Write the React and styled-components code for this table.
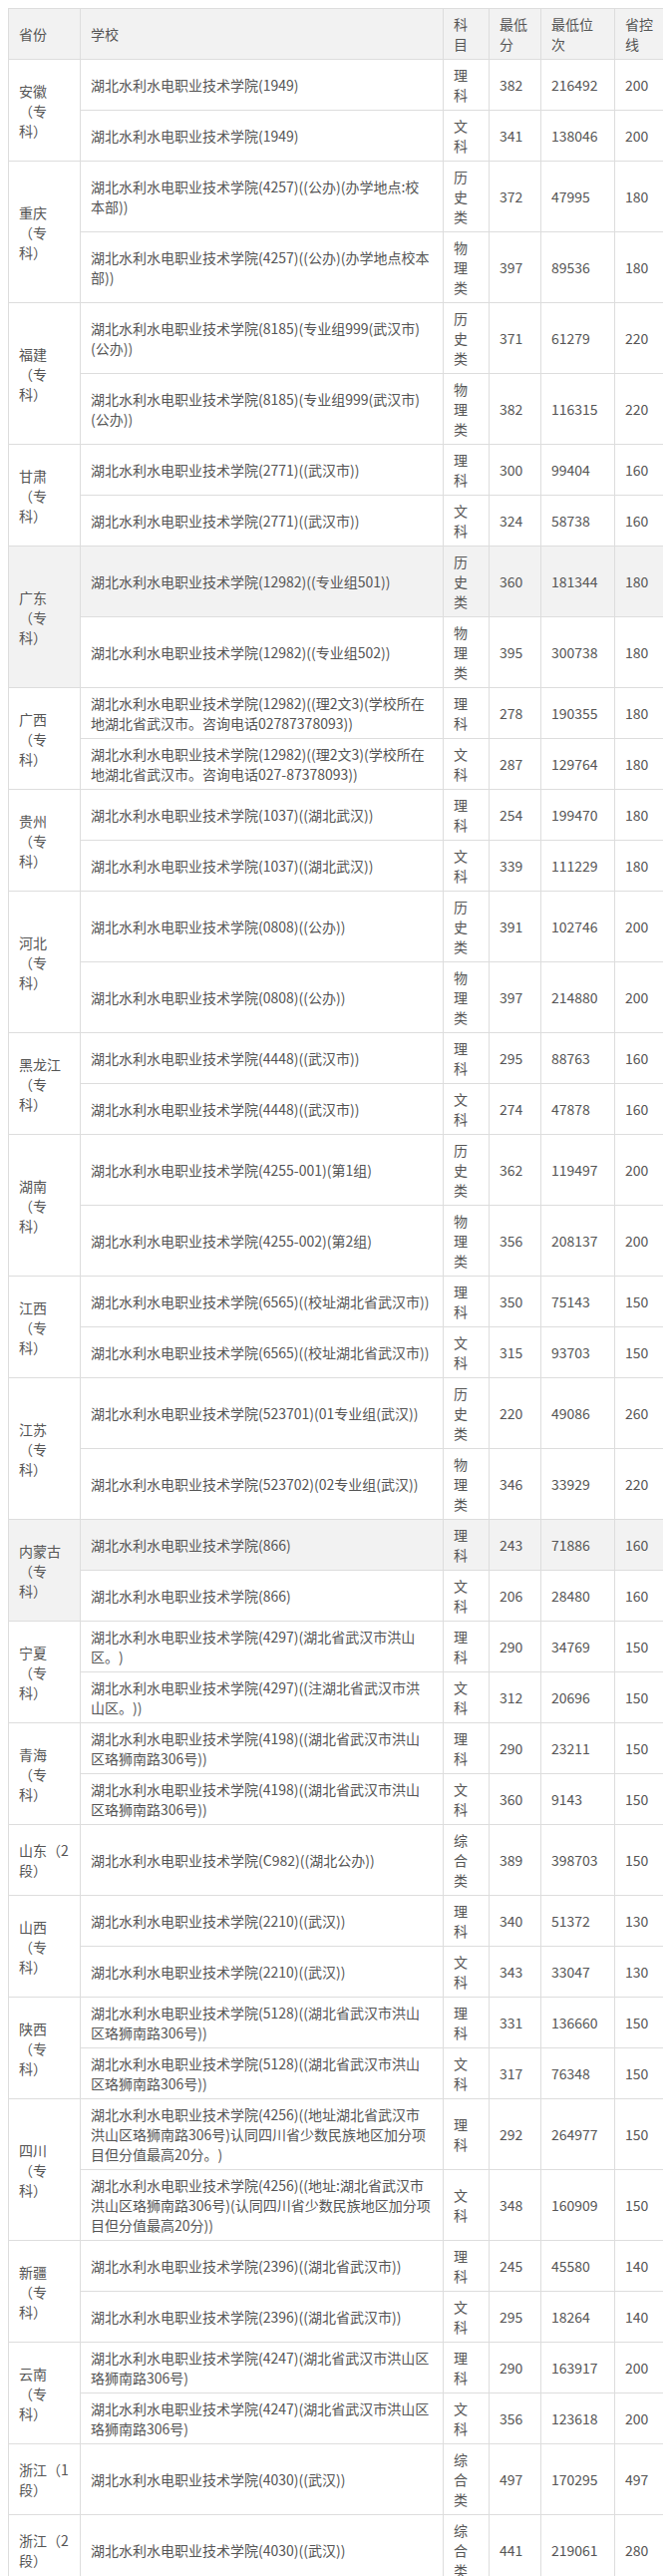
import React from "react";
import styled, { createGlobalStyle } from "styled-components";

const GlobalStyle = createGlobalStyle`
  html, body { background: #fff; }
  body {
    margin: 8px;
    font-family: "Microsoft YaHei", "Noto Sans CJK SC", "Noto Sans", sans-serif;
  }
`;

const Table = styled.table`
  width: 100%;
  border-collapse: collapse;
  table-layout: fixed;
  font-size: 14px;
  line-height: 20px;
  color: #555;
  text-spacing-trim: space-all;
`;

const Col = styled.col`
  width: ${(p) => p.$w}px;
`;

const HeadRow = styled.tr`
  background: #f2f2f2;
`;

const Th = styled.th`
  border: 1px solid #ddd;
  padding: 5px 10px;
  text-align: left;
  font-weight: normal;
  vertical-align: middle;
`;

const Row = styled.tr`
  background: ${(p) => (p.$hl ? "#f2f2f2" : "#fff")};
`;

const Td = styled.td`
  border: 1px solid #ddd;
  padding: 5px 10px;
  text-align: left;
  vertical-align: middle;
  word-break: normal;
  overflow-wrap: break-word;
  text-spacing-trim: space-all;
`;

const S = "湖北水利水电职业技术学院";

const groups = [
  { p: "安徽（专科）", rows: [
    [S + "(1949)", "理科", "382", "216492", "200"],
    [S + "(1949)", "文科", "341", "138046", "200"],
  ]},
  { p: "重庆（专科）", rows: [
    [S + "(4257)((公办)(办学地点:校本部))", "历史类", "372", "47995", "180"],
    [S + "(4257)((公办)(办学地点校本部))", "物理类", "397", "89536", "180"],
  ]},
  { p: "福建（专科）", rows: [
    [S + "(8185)(专业组999(武汉市)(公办))", "历史类", "371", "61279", "220"],
    [S + "(8185)(专业组999(武汉市)(公办))", "物理类", "382", "116315", "220"],
  ]},
  { p: "甘肃（专科）", rows: [
    [S + "(2771)((武汉市))", "理科", "300", "99404", "160"],
    [S + "(2771)((武汉市))", "文科", "324", "58738", "160"],
  ]},
  { p: "广东（专科）", hl: true, rows: [
    [S + "(12982)((专业组501))", "历史类", "360", "181344", "180"],
    [S + "(12982)((专业组502))", "物理类", "395", "300738", "180"],
  ]},
  { p: "广西（专科）", rows: [
    [S + "(12982)((理2文3)(学校所在地湖北省武汉市。咨询电话02787378093))", "理科", "278", "190355", "180"],
    [S + "(12982)((理2文3)(学校所在地湖北省武汉市。咨询电话027-87378093))", "文科", "287", "129764", "180"],
  ]},
  { p: "贵州（专科）", rows: [
    [S + "(1037)((湖北武汉))", "理科", "254", "199470", "180"],
    [S + "(1037)((湖北武汉))", "文科", "339", "111229", "180"],
  ]},
  { p: "河北（专科）", rows: [
    [S + "(0808)((公办))", "历史类", "391", "102746", "200"],
    [S + "(0808)((公办))", "物理类", "397", "214880", "200"],
  ]},
  { p: "黑龙江（专科）", rows: [
    [S + "(4448)((武汉市))", "理科", "295", "88763", "160"],
    [S + "(4448)((武汉市))", "文科", "274", "47878", "160"],
  ]},
  { p: "湖南（专科）", rows: [
    [S + "(4255-001)(第1组)", "历史类", "362", "119497", "200"],
    [S + "(4255-002)(第2组)", "物理类", "356", "208137", "200"],
  ]},
  { p: "江西（专科）", rows: [
    [S + "(6565)((校址湖北省武汉市))", "理科", "350", "75143", "150"],
    [S + "(6565)((校址湖北省武汉市))", "文科", "315", "93703", "150"],
  ]},
  { p: "江苏（专科）", rows: [
    [S + "(523701)(01专业组(武汉))", "历史类", "220", "49086", "260"],
    [S + "(523702)(02专业组(武汉))", "物理类", "346", "33929", "220"],
  ]},
  { p: "内蒙古（专科）", hl: true, rows: [
    [S + "(866)", "理科", "243", "71886", "160"],
    [S + "(866)", "文科", "206", "28480", "160"],
  ]},
  { p: "宁夏（专科）", rows: [
    [S + "(4297)(湖北省武汉市洪山区。)", "理科", "290", "34769", "150"],
    [S + "(4297)((注湖北省武汉市洪山区。))", "文科", "312", "20696", "150"],
  ]},
  { p: "青海（专科）", rows: [
    [S + "(4198)((湖北省武汉市洪山区珞狮南路306号))", "理科", "290", "23211", "150"],
    [S + "(4198)((湖北省武汉市洪山区珞狮南路306号))", "文科", "360", "9143", "150"],
  ]},
  { p: "山东（2段）", rows: [
    [S + "(C982)((湖北公办))", "综合类", "389", "398703", "150"],
  ]},
  { p: "山西（专科）", rows: [
    [S + "(2210)((武汉))", "理科", "340", "51372", "130"],
    [S + "(2210)((武汉))", "文科", "343", "33047", "130"],
  ]},
  { p: "陕西（专科）", rows: [
    [S + "(5128)((湖北省武汉市洪山区珞狮南路306号))", "理科", "331", "136660", "150"],
    [S + "(5128)((湖北省武汉市洪山区珞狮南路306号))", "文科", "317", "76348", "150"],
  ]},
  { p: "四川（专科）", rows: [
    [S + "(4256)((地址湖北省武汉市洪山区珞狮南路306号)认同四川省少数民族地区加分项目但分值最高20分。)", "理科", "292", "264977", "150"],
    [S + "(4256)((地址:湖北省武汉市洪山区珞狮南路306号)(认同四川省少数民族地区加分项目但分值最高20分))", "文科", "348", "160909", "150"],
  ]},
  { p: "新疆（专科）", rows: [
    [S + "(2396)((湖北省武汉市))", "理科", "245", "45580", "140"],
    [S + "(2396)((湖北省武汉市))", "文科", "295", "18264", "140"],
  ]},
  { p: "云南（专科）", rows: [
    [S + "(4247)(湖北省武汉市洪山区珞狮南路306号)", "理科", "290", "163917", "200"],
    [S + "(4247)(湖北省武汉市洪山区珞狮南路306号)", "文科", "356", "123618", "200"],
  ]},
  { p: "浙江（1段）", rows: [
    [S + "(4030)((武汉))", "综合类", "497", "170295", "497"],
  ]},
  { p: "浙江（2段）", rows: [
    [S + "(4030)((武汉))", "综合类", "441", "219061", "280"],
  ]},
];

const widths = [72, 364, 46, 52, 74, 49];
const heads = ["省份", "学校", "科目", "最低分", "最低位次", "省控线"];

export default function App() {
  return (
    <>
      <GlobalStyle />
      <Table>
        <colgroup>
          {widths.map((w, i) => (
            <Col key={i} $w={w} />
          ))}
        </colgroup>
        <thead>
          <HeadRow>
            {heads.map((h) => (
              <Th key={h}>{h}</Th>
            ))}
          </HeadRow>
        </thead>
        <tbody>
          {groups.map((g) =>
            g.rows.map((r, i) => (
              <Row key={g.p + i} $hl={g.hl && i === 0}>
                {i === 0 && <Td rowSpan={g.rows.length}>{g.p}</Td>}
                {r.map((c, j) => (
                  <Td key={j}>{c}</Td>
                ))}
              </Row>
            ))
          )}
        </tbody>
      </Table>
    </>
  );
}
